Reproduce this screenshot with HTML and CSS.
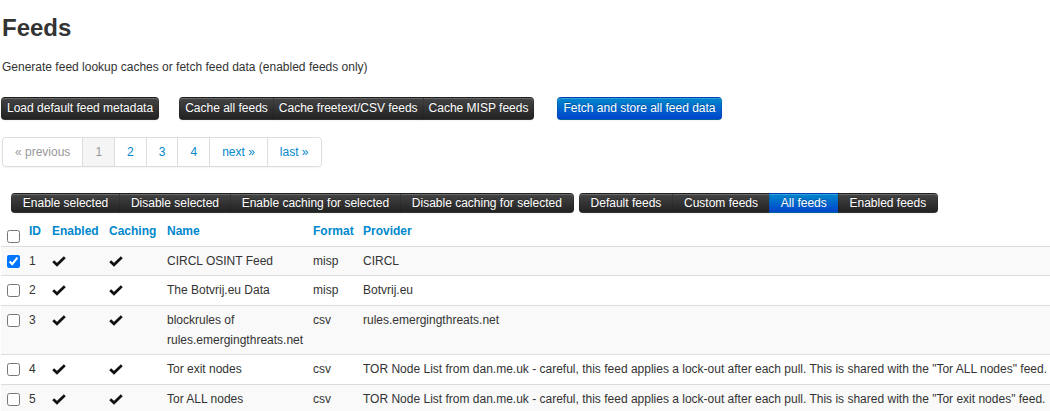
FILE: index.html
```html
<!DOCTYPE html>
<html>
<head>
<meta charset="utf-8">
<link rel="stylesheet" href="styles.css">
</head>
<body>
<div class="page">
  <h2 class="title">Feeds</h2>
  <p class="intro">Generate feed lookup caches or fetch feed data (enabled feeds only)</p>

  <div class="toolbar">
    <div class="btn-group">
      <a class="btn inverse">Load default feed metadata</a>
    </div>
    <div class="btn-group">
      <a class="btn inverse">Cache all feeds</a><a class="btn inverse">Cache freetext/CSV feeds</a><a class="btn inverse">Cache MISP feeds</a>
    </div>
    <div class="btn-group">
      <a class="btn primary">Fetch and store all feed data</a>
    </div>
  </div>

  <ul class="pagination">
    <li class="disabled">« previous</li>
    <li class="active">1</li>
    <li>2</li>
    <li>3</li>
    <li>4</li>
    <li>next »</li>
    <li>last »</li>
  </ul>

  <div class="toolbar small">
    <div class="btn-group">
      <a class="btn inverse">Enable selected</a><a class="btn inverse">Disable selected</a><a class="btn inverse">Enable caching for selected</a><a class="btn inverse">Disable caching for selected</a>
    </div>
    <div class="btn-group">
      <a class="btn inverse">Default feeds</a><a class="btn inverse">Custom feeds</a><a class="btn primary">All feeds</a><a class="btn inverse">Enabled feeds</a>
    </div>
  </div>

  <table class="feeds">
    <colgroup>
      <col class="c-cb"><col class="c-id"><col class="c-en"><col class="c-ca"><col class="c-name"><col class="c-fmt"><col class="c-prov">
    </colgroup>
    <thead>
      <tr>
        <th class="cb"><input type="checkbox"></th>
        <th>ID</th><th>Enabled</th><th>Caching</th><th>Name</th><th>Format</th><th>Provider</th>
      </tr>
    </thead>
    <tbody>
      <tr>
        <td class="cb"><input type="checkbox" checked></td>
        <td>1</td>
        <td><svg class="ok" viewBox="0 0 14 11"><path d="M1.2 5.2 L5 8.8 L12.8 1.2"/></svg></td>
        <td><svg class="ok" viewBox="0 0 14 11"><path d="M1.2 5.2 L5 8.8 L12.8 1.2"/></svg></td>
        <td>CIRCL OSINT Feed</td><td>misp</td><td class="prov">CIRCL</td>
      </tr>
      <tr>
        <td class="cb"><input type="checkbox"></td>
        <td>2</td>
        <td><svg class="ok" viewBox="0 0 14 11"><path d="M1.2 5.2 L5 8.8 L12.8 1.2"/></svg></td>
        <td><svg class="ok" viewBox="0 0 14 11"><path d="M1.2 5.2 L5 8.8 L12.8 1.2"/></svg></td>
        <td>The Botvrij.eu Data</td><td>misp</td><td class="prov">Botvrij.eu</td>
      </tr>
      <tr>
        <td class="cb"><input type="checkbox"></td>
        <td>3</td>
        <td><svg class="ok" viewBox="0 0 14 11"><path d="M1.2 5.2 L5 8.8 L12.8 1.2"/></svg></td>
        <td><svg class="ok" viewBox="0 0 14 11"><path d="M1.2 5.2 L5 8.8 L12.8 1.2"/></svg></td>
        <td>blockrules of rules.emergingthreats.net</td><td>csv</td><td class="prov">rules.emergingthreats.net</td>
      </tr>
      <tr>
        <td class="cb"><input type="checkbox"></td>
        <td>4</td>
        <td><svg class="ok" viewBox="0 0 14 11"><path d="M1.2 5.2 L5 8.8 L12.8 1.2"/></svg></td>
        <td><svg class="ok" viewBox="0 0 14 11"><path d="M1.2 5.2 L5 8.8 L12.8 1.2"/></svg></td>
        <td>Tor exit nodes</td><td>csv</td><td class="prov">TOR Node List from dan.me.uk - careful, this feed applies a lock-out after each pull. This is shared with the "Tor ALL nodes" feed.</td>
      </tr>
      <tr>
        <td class="cb"><input type="checkbox"></td>
        <td>5</td>
        <td><svg class="ok" viewBox="0 0 14 11"><path d="M1.2 5.2 L5 8.8 L12.8 1.2"/></svg></td>
        <td><svg class="ok" viewBox="0 0 14 11"><path d="M1.2 5.2 L5 8.8 L12.8 1.2"/></svg></td>
        <td>Tor ALL nodes</td><td>csv</td><td class="prov">TOR Node List from dan.me.uk - careful, this feed applies a lock-out after each pull. This is shared with the "Tor exit nodes" feed.</td>
      </tr>
    </tbody>
  </table>
</div>
</body>
</html>
```

FILE: styles.css
```css
html, body {
  margin: 0;
  padding: 0;
  background: #fff;
}
body {
  font-family: "Liberation Sans", Arial, sans-serif;
  font-size: 12px;
  line-height: 18px;
  color: #333;
  overflow: hidden;
}
.page {
  padding: 0 0 0 1px;
}
.title {
  margin: 13px 0 15px 1px;
  font-size: 24px;
  line-height: 30px;
  font-weight: bold;
  color: #333;
}
.intro {
  margin: 0 0 21px 1px;
}
.toolbar {
  display: flex;
  gap: 20px;
  margin-bottom: 17px;
}
.toolbar .btn-group:nth-child(3) {
  margin-left: 3px;
}
.btn-group {
  display: flex;
}
.btn {
  display: block;
  white-space: nowrap;
  padding: 2px 5px;
  line-height: 17px;
  font-size: 12px;
  color: #fff;
  text-shadow: 0 -1px 0 rgba(0,0,0,0.25);
  border: 1px solid rgba(0,0,0,0.1);
  border-bottom-color: rgba(0,0,0,0.25);
  box-shadow: inset 0 1px 0 rgba(255,255,255,0.2), 0 1px 2px rgba(0,0,0,0.05);
  cursor: pointer;
}
.btn.inverse {
  background-color: #363636;
  background-image: linear-gradient(to bottom, #444, #222);
}
.btn.primary {
  background-color: #006dcc;
  background-image: linear-gradient(to bottom, #0088cc, #0044cc);
}
.btn-group .btn + .btn {
  margin-left: -1px;
}
.btn-group .btn:first-child {
  border-top-left-radius: 4px;
  border-bottom-left-radius: 4px;
}
.btn-group .btn:last-child {
  border-top-right-radius: 4px;
  border-bottom-right-radius: 4px;
}

.pagination {
  display: inline-flex;
  list-style: none;
  margin: 0 0 26px 1px;
  padding: 0;
  border: 1px solid #ddd;
  border-radius: 4px;
  box-shadow: 0 1px 2px rgba(0,0,0,0.05);
}
.pagination li {
  padding: 4px 12px;
  line-height: 20px;
  color: #0088cc;
  border-left: 1px solid #ddd;
  background: #fff;
}
.pagination li:first-child {
  border-left: 0;
  border-radius: 4px 0 0 4px;
}
.pagination li:last-child {
  border-radius: 0 4px 4px 0;
}
.pagination li.disabled {
  color: #999;
}
.pagination li.active {
  color: #999;
  background: #f5f5f5;
}

.toolbar.small {
  gap: 5px;
  margin: 0 0 4px 10px;
}
.toolbar.small .btn {
  padding: 1px 10.85px;
  line-height: 16px;
}

.feeds {
  width: 1049px;
  table-layout: fixed;
  border-collapse: collapse;
  border-spacing: 0;
}
.c-cb { width: 23px; }
.c-id { width: 23px; }
.c-en { width: 57px; }
.c-ca { width: 58px; }
.c-name { width: 146px; }
.c-fmt { width: 50px; }
.feeds th, .feeds td {
  padding: 4.25px 5px;
  line-height: 20px;
  text-align: left;
  vertical-align: top;
}
.feeds th {
  color: #0088cc;
  font-weight: bold;
  vertical-align: bottom;
}
.feeds td {
  border-top: 1px solid #ddd;
}
.feeds tbody tr:nth-child(odd) td {
  background: #f9f9f9;
}
.feeds .cb {
  padding-left: 5px;
  padding-right: 0;
}
.feeds input[type=checkbox] {
  margin: 4px 0 0 1px;
  width: 13px;
  height: 13px;
  vertical-align: top;
}
.feeds th input[type=checkbox] {
  margin-top: 9px;
  margin-bottom: -5px;
}
.feeds .prov {
  white-space: nowrap;
}
.ok {
  display: block;
  width: 14px;
  height: 11px;
  margin-top: 5px;
}
.ok path {
  fill: none;
  stroke: #111;
  stroke-width: 2.7;
}
```
